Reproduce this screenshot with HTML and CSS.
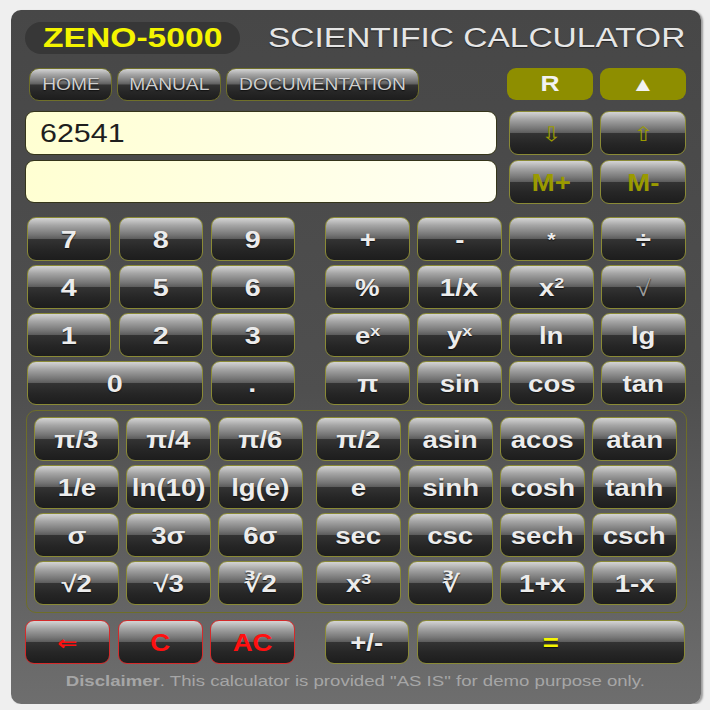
FILE: index.html
```html
<!DOCTYPE html>
<html>
<head>
<meta charset="utf-8">
<link rel="stylesheet" href="styles.css">
</head>
<body>
<div class="calc">
  <header class="top">
    <div class="logo"><span class="sx">ZENO-5000</span></div>
    <div class="title"><span class="sx">SCIENTIFIC CALCULATOR</span></div>
  </header>

  <div class="navrow">
    <nav class="links">
      <div class="key link home"><span class="lb">HOME</span></div>
      <div class="key link manual"><span class="lb">MANUAL</span></div>
      <div class="key link docs"><span class="lb">DOCUMENTATION</span></div>
    </nav>
    <div class="rbtns">
      <div class="olive"><span class="lb">R</span></div>
      <div class="olive"><span class="lb tri">▲</span></div>
    </div>
  </div>

  <div class="disp">
    <div class="screen"><span class="num">62541</span></div>
    <div class="key ol arrow"><span class="lb">⇩</span></div>
    <div class="key ol arrow"><span class="lb">⇧</span></div>
    <div class="screen"></div>
    <div class="key ol"><span class="lb">M+</span></div>
    <div class="key ol"><span class="lb">M-</span></div>
  </div>

  <div class="pad">
    <div class="grid3">
      <div class="key dig"><span class="lb">7</span></div>
      <div class="key dig"><span class="lb">8</span></div>
      <div class="key dig"><span class="lb">9</span></div>
      <div class="key dig"><span class="lb">4</span></div>
      <div class="key dig"><span class="lb">5</span></div>
      <div class="key dig"><span class="lb">6</span></div>
      <div class="key dig"><span class="lb">1</span></div>
      <div class="key dig"><span class="lb">2</span></div>
      <div class="key dig"><span class="lb">3</span></div>
      <div class="key dig span2"><span class="lb">0</span></div>
      <div class="key dig"><span class="lb">.</span></div>
    </div>
    <div class="grid4">
      <div class="key"><span class="lb">+</span></div>
      <div class="key"><span class="lb">-</span></div>
      <div class="key small"><span class="lb">*</span></div>
      <div class="key"><span class="lb">÷</span></div>
      <div class="key"><span class="lb">%</span></div>
      <div class="key"><span class="lb">1/x</span></div>
      <div class="key"><span class="lb">x<sup>2</sup></span></div>
      <div class="key thin"><span class="lb">√</span></div>
      <div class="key"><span class="lb">e<sup>x</sup></span></div>
      <div class="key"><span class="lb">y<sup>x</sup></span></div>
      <div class="key"><span class="lb">ln</span></div>
      <div class="key"><span class="lb">lg</span></div>
      <div class="key"><span class="lb">π</span></div>
      <div class="key"><span class="lb">sin</span></div>
      <div class="key"><span class="lb">cos</span></div>
      <div class="key"><span class="lb">tan</span></div>
    </div>
  </div>

  <section class="sci">
    <div class="grid3 s3">
      <div class="key"><span class="lb">π/3</span></div>
      <div class="key"><span class="lb">π/4</span></div>
      <div class="key"><span class="lb">π/6</span></div>
      <div class="key"><span class="lb">1/e</span></div>
      <div class="key"><span class="lb">ln(10)</span></div>
      <div class="key"><span class="lb">lg(e)</span></div>
      <div class="key"><span class="lb">σ</span></div>
      <div class="key"><span class="lb">3σ</span></div>
      <div class="key"><span class="lb">6σ</span></div>
      <div class="key"><span class="lb">√2</span></div>
      <div class="key"><span class="lb">√3</span></div>
      <div class="key"><span class="lb">∛2</span></div>
    </div>
    <div class="grid4 s4">
      <div class="key"><span class="lb">π/2</span></div>
      <div class="key"><span class="lb">asin</span></div>
      <div class="key"><span class="lb">acos</span></div>
      <div class="key"><span class="lb">atan</span></div>
      <div class="key"><span class="lb">e</span></div>
      <div class="key"><span class="lb">sinh</span></div>
      <div class="key"><span class="lb">cosh</span></div>
      <div class="key"><span class="lb">tanh</span></div>
      <div class="key"><span class="lb">sec</span></div>
      <div class="key"><span class="lb">csc</span></div>
      <div class="key"><span class="lb">sech</span></div>
      <div class="key"><span class="lb">csch</span></div>
      <div class="key"><span class="lb">x<sup>3</sup></span></div>
      <div class="key"><span class="lb">∛</span></div>
      <div class="key"><span class="lb">1+x</span></div>
      <div class="key"><span class="lb">1-x</span></div>
    </div>
  </section>

  <div class="bottom">
    <div class="grid3 b3">
      <div class="key red arrow"><span class="lb">⇐</span></div>
      <div class="key red"><span class="lb">C</span></div>
      <div class="key red"><span class="lb">AC</span></div>
    </div>
    <div class="b2">
      <div class="key pm"><span class="lb">+/-</span></div>
      <div class="key eq"><span class="lb">=</span></div>
    </div>
  </div>

  <p class="disclaimer"><span class="sx"><b>Disclaimer</b>. This calculator is provided "AS IS" for demo purpose only.</span></p>
</div>
</body>
</html>
```

FILE: styles.css
```css
html, body {
  margin: 0;
  padding: 0;
  background: #efefef;
}
body {
  font-family: "Liberation Sans", Arial, "DejaVu Sans", sans-serif;
}
.calc {
  box-sizing: border-box;
  width: 690px;
  height: 694px;
  margin: 10px 0 0 11px;
  padding: 12px 15px 0 14px;
  border-radius: 10px;
  background: linear-gradient(to bottom, #474747 0%, #4f4f4f 55%, #6e6e6e 100%);
  box-shadow: 2px 1px 2px rgba(0,0,0,0.35);
}
.sx, .lb {
  display: inline-block;
  transform: scaleX(1.2);
}

/* header */
.top {
  display: flex;
  align-items: center;
  height: 32px;
}
.logo {
  box-sizing: border-box;
  width: 215px;
  height: 32px;
  border-radius: 16px;
  background: #373737;
  display: flex;
  align-items: center;
  justify-content: center;
  color: #f4f400;
  font-weight: bold;
  font-size: 28px;
  line-height: 32px;
}
.title {
  margin-left: 28px;
  color: #e6e6e6;
  font-size: 27px;
  line-height: 32px;
  text-shadow: 0 1px 1px #222;
}
.title .sx {
  transform-origin: left center;
  transform: scaleX(1.24);
}

/* keys */
.key {
  box-sizing: border-box;
  height: 44px;
  padding-top: 2px;
  display: flex;
  align-items: center;
  justify-content: center;
  border: 1.5px solid #8a8a36;
  border-radius: 9px;
  background: linear-gradient(to bottom, #d4d4d4 0%, #a4a4a4 18%, #757575 40%, #5e5e5e 49%, #333 51%, #262626 75%, #1d1d1d 100%);
  color: #ececec;
  font-weight: bold;
  font-size: 23px;
  text-shadow: 0 1px 1px #111;
  white-space: nowrap;
}
.key sup {
  font-size: 15px;
  vertical-align: 8px;
  line-height: 0;
}
.key.dig { font-size: 24px; }
.key.small { font-size: 18px; }
.key.thin { font-weight: normal; color: #9a9a9a; }

/* nav row */
.navrow {
  display: flex;
  justify-content: space-between;
  margin-top: 14px;
  height: 33px;
}
.links {
  display: flex;
  gap: 5px;
  margin-left: 4px;
}
.key.link {
  height: 33px;
  padding-top: 1px;
  font-weight: normal;
  font-size: 16px;
  color: #cfcfcf;
  border-radius: 10px;
  border-color: #6f6f2a;
}
.home { width: 83px; }
.manual { width: 104px; }
.docs { width: 193px; }
.rbtns {
  display: flex;
  gap: 7px;
}
.olive {
  width: 86px;
  height: 32px;
  border-radius: 9px;
  background: #8e8e00;
  color: #f2f2f2;
  font-weight: bold;
  font-size: 22px;
  display: flex;
  align-items: center;
  justify-content: center;
}
.olive .tri { font-size: 20px; }

/* display */
.disp {
  display: grid;
  grid-template-columns: 1fr 84px 86px;
  grid-template-rows: 44px 43px;
  column-gap: 7px;
  row-gap: 5px;
  margin-top: 10px;
}
.disp .screen { margin-right: 5px; }
.screen {
  box-sizing: border-box;
  border: 1.5px solid #35351a;
  border-radius: 9px;
  background: linear-gradient(to right, #ffffd2 0%, #ffffe6 60%, #fffff4 100%);
  padding-left: 14px;
  display: flex;
  align-items: center;
}
.num {
  display: inline-block;
  font-size: 26px;
  color: #1e1e1e;
  transform: scaleX(1.17);
  transform-origin: left center;
}
.key.ol {
  color: #9a9a00;
  text-shadow: none;
}
.key.ol.arrow { font-size: 20px; font-weight: normal; font-family: "DejaVu Sans", sans-serif; }

/* main pad */
.pad {
  display: flex;
  margin-top: 14px;
  margin-left: 2px;
}
.grid3, .grid4 {
  display: grid;
  grid-auto-rows: 44px;
  row-gap: 4px;
}
.pad .grid3 {
  width: 268px;
  grid-template-columns: repeat(3, 1fr);
  column-gap: 7.5px;
}
.span2 { grid-column: span 2; }
.pad .grid4 {
  width: 361px;
  margin-left: 30px;
  grid-template-columns: repeat(4, 1fr);
  column-gap: 7.5px;
}

/* scientific panel */
.sci {
  box-sizing: border-box;
  display: flex;
  width: 661px;
  height: 203px;
  margin-top: 5px;
  margin-left: 1px;
  padding: 6px 9px 0 7px;
  border: 1px solid #6e6e28;
  border-radius: 10px;
}
.s3 {
  width: 269px;
  grid-template-columns: repeat(3, 1fr);
  column-gap: 7px;
}
.s4 {
  width: 361px;
  margin-left: 13px;
  grid-template-columns: repeat(4, 1fr);
  column-gap: 7px;
}

/* bottom row */
.bottom {
  display: flex;
  margin-top: 7px;
}
.b3 {
  width: 270px;
  grid-template-columns: repeat(3, 1fr);
  column-gap: 7.5px;
}
.b2 {
  display: flex;
  gap: 8px;
  margin-left: 30px;
}
.key.red {
  border-color: #d42a2a;
  color: #ff1010;
  text-shadow: none;
}
.key.red.arrow { font-size: 20px; font-family: "DejaVu Sans", sans-serif; }
.key.pm { width: 84px; }
.key.eq { width: 268px; color: #f6f600; }

.disclaimer {
  margin: 8px 0 0;
  text-align: center;
  color: #a6a6a6;
  font-size: 15.5px;
  line-height: 18px;
}
.disclaimer b { font-weight: bold; }
```
